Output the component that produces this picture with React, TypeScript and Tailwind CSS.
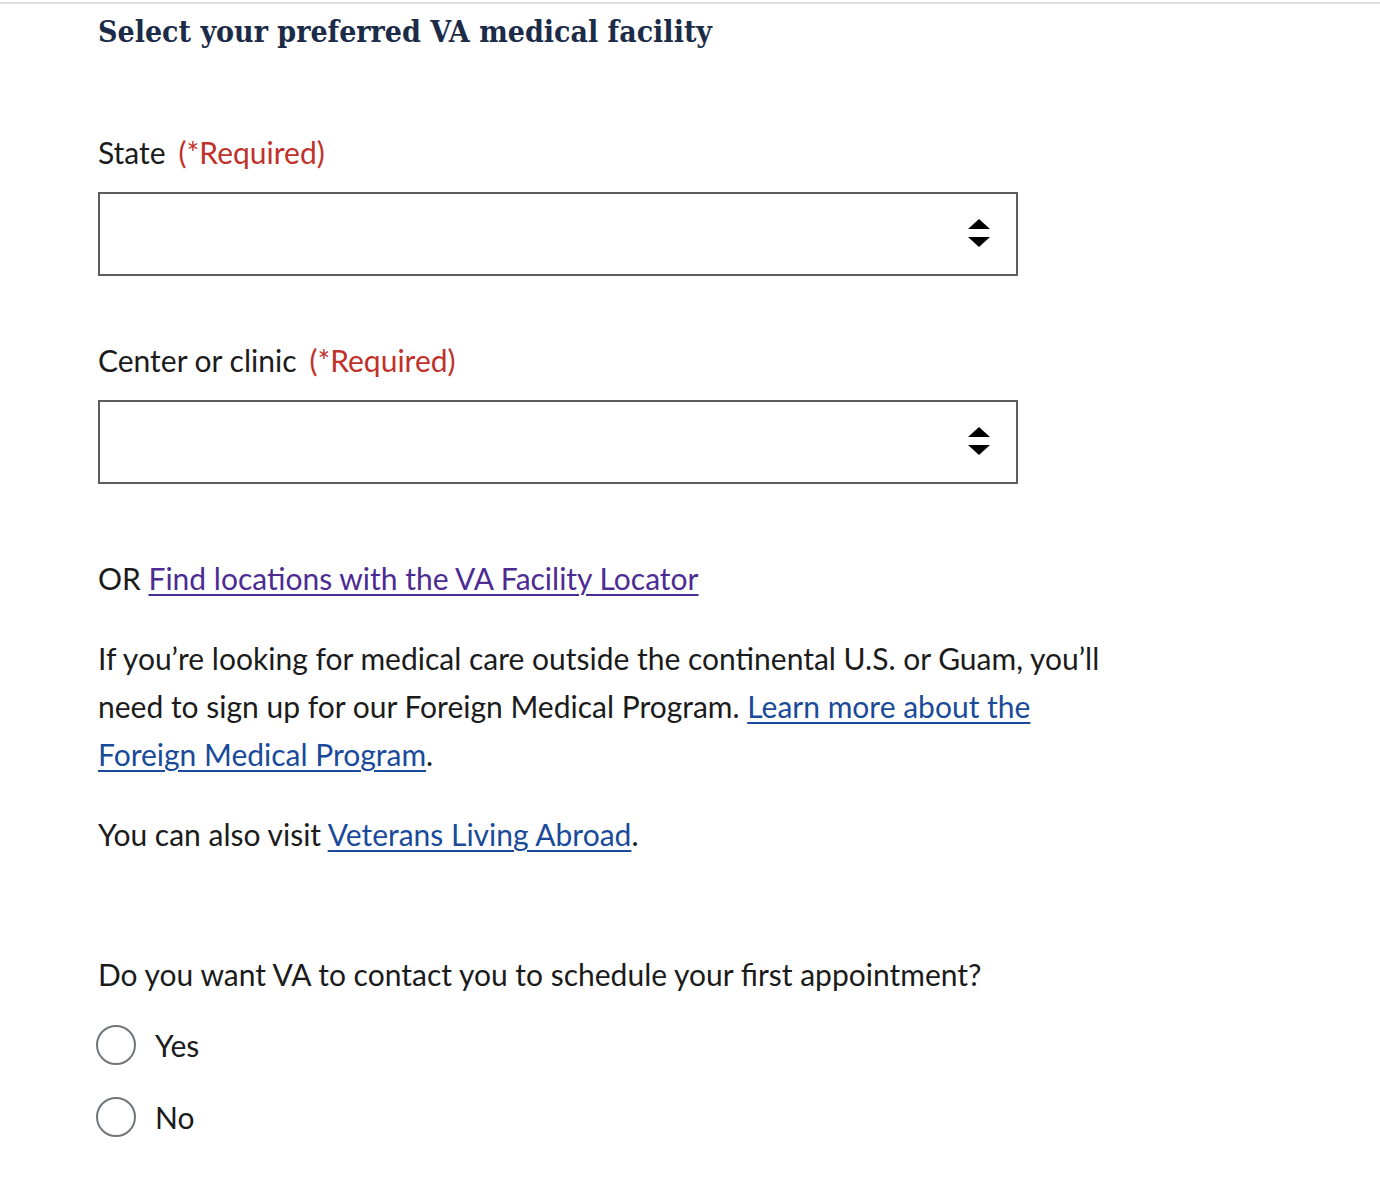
import { useState } from 'react'

const body = { fontFamily: 'Lato, "Noto Sans", sans-serif' }

function SelectArrows() {
  return (
    <svg width="22" height="30" viewBox="0 0 22 30" className="shrink-0">
      <polygon points="11,0 22,10 0,10" fill="#000" />
      <polygon points="0,18 22,18 11,28" fill="#000" />
    </svg>
  )
}

function FakeSelect() {
  return (
    <div className="w-[920px] h-[84px] border-2 border-[#5d5d5d] bg-white flex items-center justify-end pr-[26px]">
      <SelectArrows />
    </div>
  )
}

function Required() {
  return <span className="text-[#c0312b] ml-[13px]">(*Required)</span>
}

function Radio({ label, checked, onClick }: { label: string; checked: boolean; onClick: () => void }) {
  return (
    <button onClick={onClick} className="flex items-center h-[48px] -ml-[2px] text-left">
      <span className="w-[40px] h-[40px] rounded-full border-2 border-[#71767a] bg-white flex items-center justify-center">
        {checked && <span className="w-[22px] h-[22px] rounded-full bg-[#005ea2]" />}
      </span>
      <span className="ml-[19px] text-[30px] text-[#1b1b1b]">{label}</span>
    </button>
  )
}

export default function App() {
  const [contact, setContact] = useState<string | null>(null)

  return (
    <div className="min-h-screen bg-white text-[#1b1b1b]" style={body}>
      <div className="h-[2px] mt-[2px] bg-[#dcdcdc]" />

      <div className="pl-[98px] w-[1128px]">
        {/* Heading */}
        <h2
          className="mt-[8px] text-[30px] leading-[40px] font-bold text-[#1b2b48]"
          style={{ fontFamily: '"DejaVu Serif Condensed", "DejaVu Serif", serif' }}
        >
          Select your preferred VA medical facility
        </h2>

        {/* State */}
        <div className="mt-[76px] text-[30px] leading-[48px]">
          State<Required />
        </div>
        <div className="mt-[16px]">
          <FakeSelect />
        </div>

        {/* Center or clinic */}
        <div className="mt-[60px] text-[30px] leading-[48px]">
          Center or clinic<Required />
        </div>
        <div className="mt-[16px]">
          <FakeSelect />
        </div>

        <p className="mt-[70px] text-[30px] leading-[48px]">
          OR{' '}
          <a href="#" className="text-[#4c2c92] underline underline-offset-[4px] decoration-2">
            Find locations with the VA Facility Locator
          </a>
        </p>

        <p className="mt-[32px] text-[30px] leading-[48px]">
          If you’re looking for medical care outside the continental U.S. or Guam, you’ll need to sign up for our Foreign
          Medical Program.{' '}
          <a href="#" className="text-[#1a4a9a] underline underline-offset-[4px] decoration-2">
            Learn more about the Foreign Medical Program
          </a>
          .
        </p>

        <p className="mt-[32px] text-[30px] leading-[48px]">
          You can also visit{' '}
          <a href="#" className="text-[#1a4a9a] underline underline-offset-[4px] decoration-2">
            Veterans Living Abroad
          </a>
          .
        </p>

        {/* Appointment question */}
        <p className="mt-[92px] text-[30px] leading-[48px]">
          Do you want VA to contact you to schedule your first appointment?
        </p>
        <div className="mt-[23px] flex flex-col gap-[24px]">
          <Radio label="Yes" checked={contact === 'yes'} onClick={() => setContact('yes')} />
          <Radio label="No" checked={contact === 'no'} onClick={() => setContact('no')} />
        </div>
      </div>
    </div>
  )
}
